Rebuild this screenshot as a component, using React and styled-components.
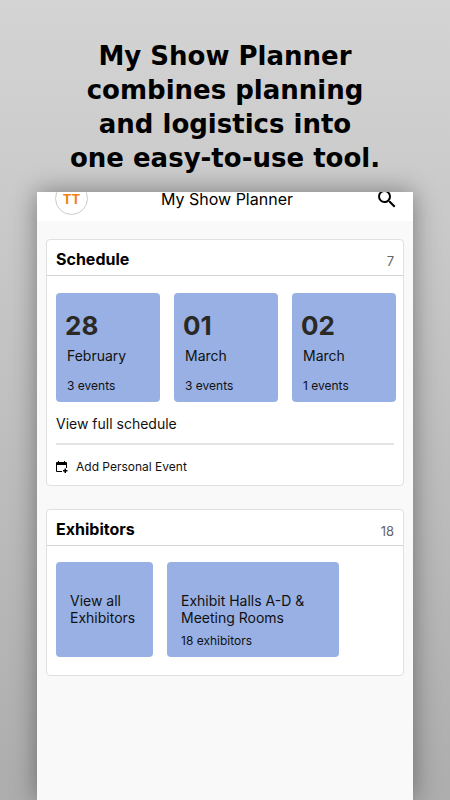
import React from 'react';
import styled, { createGlobalStyle } from 'styled-components';

const days = [
  { id: 'feb-28', day: '28', month: 'February', events: 3 },
  { id: 'mar-01', day: '01', month: 'March', events: 3 },
  { id: 'mar-02', day: '02', month: 'March', events: 1 },
];

const SearchIcon = () => (
  <svg width="24" height="24" viewBox="0 0 24 24" fill="#000" aria-hidden="true">
    <path d="M15.5 14h-.79l-.28-.27A6.47 6.47 0 0 0 16 9.5 6.5 6.5 0 1 0 9.5 16c1.61 0 3.09-.59 4.23-1.57l.27.28v.79l5 4.99L20.49 19l-4.99-5zm-6 0C7.01 14 5 11.99 5 9.5S7.01 5 9.5 5 14 7.01 14 9.5 11.99 14 9.5 14z" />
  </svg>
);

const CalendarAddIcon = () => (
  <svg width="12" height="12" viewBox="0 0 12 12" fill="#000" aria-hidden="true">
    <path d="M1 1h1V0h1v1h5V0h1v1h1a1 1 0 0 1 1 1v5h-1V4H1v6h5v1H1a1 1 0 0 1-1-1V2a1 1 0 0 1 1-1z" />
    <path d="M8.500 7.500h1.500V9H11.500v1.500H10V12H8.500v-1.500H7V9h1.500z" />
  </svg>
);

const App = () => {
  return (
    <>
      <GlobalStyle />
      <Page>
        <Headline>
          My Show Planner
          <br />
          combines planning
          <br />
          and logistics into
          <br />
          one easy-to-use tool.
        </Headline>
        <Phone>
          <TopBar>
            <Avatar type="button">TT</Avatar>
            <Title>My Show Planner</Title>
            <SearchButton type="button" aria-label="Search">
              <SearchIcon />
            </SearchButton>
          </TopBar>
          <Content>
            <Card>
              <CardHeader>
                <CardTitle>Schedule</CardTitle>
                <Count>7</Count>
              </CardHeader>
              <DayTiles>
                {days.map(({ id, day, month, events }) => (
                  <DayTile key={id} href={`#${id}`}>
                    <Day>{day}</Day>
                    <Month>{month}</Month>
                    <Small>{events} events</Small>
                  </DayTile>
                ))}
              </DayTiles>
              <ScheduleLink href="#schedule">View full schedule</ScheduleLink>
              <AddButton type="button">
                <CalendarAddIcon />
                Add Personal Event
              </AddButton>
            </Card>
            <Card>
              <CardHeader>
                <CardTitle>Exhibitors</CardTitle>
                <Count>18</Count>
              </CardHeader>
              <HallTiles>
                <HallTile href="#exhibitors" $width="97px">
                  <HallName>
                    View all
                    <br />
                    Exhibitors
                  </HallName>
                </HallTile>
                <HallTile href="#halls" $width="172px">
                  <HallName>
                    Exhibit Halls A-D &amp;
                    <br />
                    Meeting Rooms
                  </HallName>
                  <Small>18 exhibitors</Small>
                </HallTile>
              </HallTiles>
            </Card>
          </Content>
        </Phone>
      </Page>
    </>
  );
};

const GlobalStyle = createGlobalStyle`
  * {
    box-sizing: border-box;
  }
  body {
    margin: 0;
    font-family: Inter, 'Liberation Sans', sans-serif;
    color: #111;
  }
  button {
    padding: 0;
    border: none;
    background: none;
    font-family: inherit;
    color: inherit;
    cursor: pointer;
  }
  a {
    color: inherit;
    text-decoration: none;
  }
`;

const Page = styled.div`
  display: flex;
  flex-direction: column;
  min-height: 100vh;
  padding-top: 39px;
  background: linear-gradient(#d4d4d4, #c4c4c4 40%, #adadad);
  overflow: hidden;
`;

const Headline = styled.h1`
  margin: 0 0 17px;
  font-family: 'DejaVu Sans', sans-serif;
  font-size: 26px;
  font-weight: 700;
  line-height: 34px;
  text-align: center;
  color: #000;
`;

const Phone = styled.main`
  flex: 1;
  display: flex;
  flex-direction: column;
  margin: 0 37px;
  background: #f9f9f9;
  box-shadow: 0 0 24px rgba(0, 0, 0, 0.4);
`;

/* shorter than the avatar, so the top of the bar is cut off */
const TopBar = styled.header`
  display: grid;
  grid-template-columns: 1fr auto 1fr;
  align-content: end;
  align-items: center;
  height: 29px;
  padding: 0 14px 6px 18px;
  background: #fff;
  overflow: hidden;
`;

const Avatar = styled.button`
  width: 33px;
  height: 33px;
  border: 1px solid #ccc;
  border-radius: 50%;
  font-size: 13px;
  font-weight: 700;
  color: #f08010;
`;

const Title = styled.h2`
  margin: 0;
  font-size: 16px;
  font-weight: 400;
  line-height: 20px;
  color: #000;
`;

const SearchButton = styled.button`
  display: flex;
  justify-self: end;
`;

const Content = styled.div`
  display: flex;
  flex-direction: column;
  gap: 23px;
  padding: 18px 9px;
`;

const Card = styled.section`
  border: 1px solid #e0e0e0;
  border-radius: 4px;
  background: #fff;
`;

const CardHeader = styled.div`
  display: flex;
  justify-content: space-between;
  align-items: center;
  height: 36px;
  padding: 2px 9px 0;
  border-bottom: 1px solid #d4d4d4;
`;

const CardTitle = styled.h3`
  margin: 0;
  font-size: 16px;
  font-weight: 700;
  line-height: 20px;
  color: #000;
`;

const Count = styled.span`
  padding-top: 4px;
  font-size: 13px;
  line-height: 16px;
  color: #666;
`;

const Tiles = styled.div`
  display: flex;
  gap: 14px;
  overflow: hidden;
`;

const DayTiles = styled(Tiles)`
  padding: 17px 0 12px 9px;
`;

const HallTiles = styled(Tiles)`
  padding: 16px 0 18px 9px;
`;

const Tile = styled.a`
  display: flex;
  flex-direction: column;
  flex-shrink: 0;
  border-radius: 4px;
  background: #98b0e4;
`;

const DayTile = styled(Tile)`
  width: 104px;
  height: 109px;
  padding: 19px 11px 0;
`;

const HallTile = styled(Tile)`
  width: ${(props) => props.$width};
  height: 95px;
  padding: 30px 14px 0;
`;

const Day = styled.span`
  margin-left: -2px;
  font-size: 26px;
  font-weight: 700;
  line-height: 28px;
  color: #2b2925;
`;

const Month = styled.span`
  margin: 7px 0 13px;
  font-size: 14px;
  line-height: 18px;
`;

const HallName = styled.span`
  margin-bottom: 7px;
  font-size: 14px;
  line-height: 17px;
  white-space: nowrap;
`;

const Small = styled.span`
  font-size: 12px;
  line-height: 16px;
`;

const ScheduleLink = styled.a`
  display: block;
  margin: 0 9px;
  padding-bottom: 9px;
  border-bottom: 2px solid #e4e4e4;
  font-size: 14px;
  line-height: 20px;
`;

const AddButton = styled.button`
  display: flex;
  align-items: center;
  gap: 8px;
  margin: 14px 9px 10px;
  font-size: 12px;
  line-height: 16px;
`;

export default App;
